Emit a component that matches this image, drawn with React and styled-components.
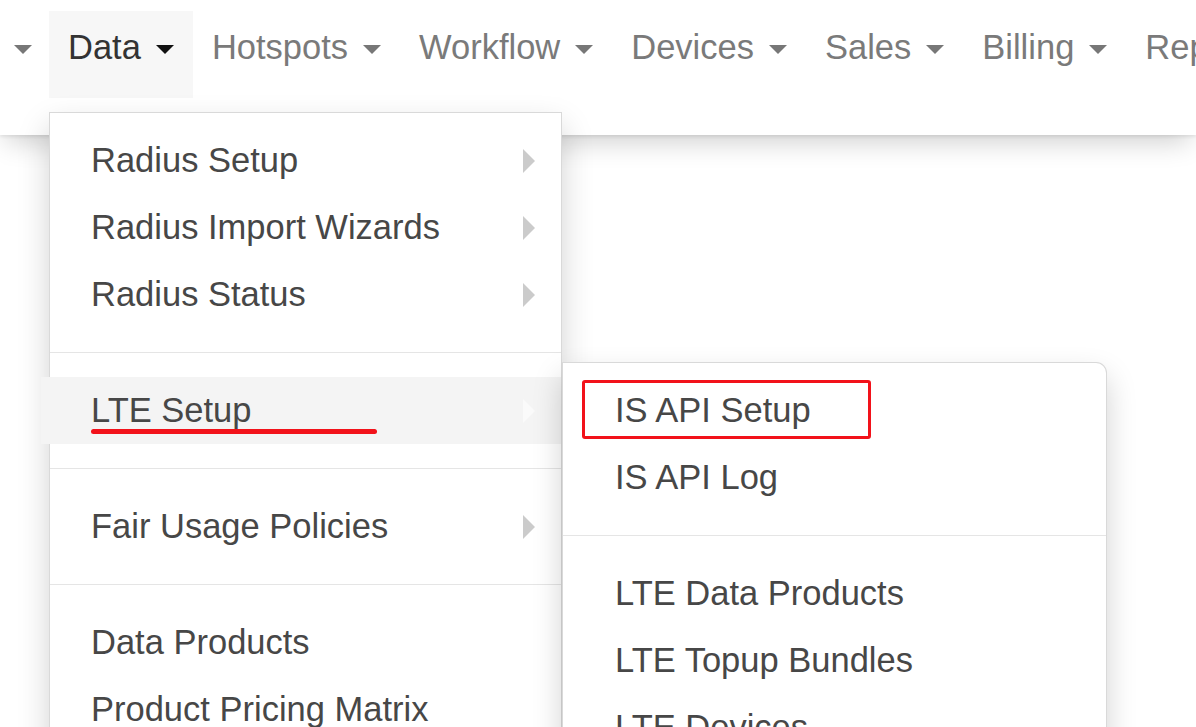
import React from "react";
import styled, { createGlobalStyle, css } from "styled-components";

const GlobalStyle = createGlobalStyle`
  html {
    overflow: hidden;
  }
  body {
    margin: 0;
    min-height: 100vh;
    background: #fff;
    font-family: "Liberation Sans", Arial, sans-serif;
  }
`;

const Navbar = styled.nav`
  position: relative;
  height: 135px;
  background: #fff;
  box-shadow: 0 2px 3px rgba(0, 0, 0, 0.07), 0 12px 26px -6px rgba(0, 0, 0, 0.2);
  z-index: 1;
`;

const NavList = styled.ul`
  display: flex;
  margin: 0;
  padding: 11px 0 0 0;
  list-style: none;
`;

const NavItem = styled.li`
  position: relative;
  flex-shrink: 0;
`;

const NavLink = styled.a`
  box-sizing: border-box;
  display: flex;
  align-items: center;
  height: 87px;
  padding: 0 19px 15px;
  font-size: 34.5px;
  white-space: nowrap;
  color: ${({ $active }) => ($active ? "#333" : "#7a7a7a")};
  background: ${({ $active }) => ($active ? "#f7f7f7" : "transparent")};
  text-decoration: none;
  cursor: pointer;
  ${({ $edge }) =>
    $edge &&
    css`
      padding: 0 17px 15px 14px;
    `}
`;

const Caret = styled.span`
  display: inline-block;
  margin-left: ${({ $alone }) => ($alone ? "0" : "15px")};
  margin-top: 4px;
  border-top: 9px solid ${({ $dark }) => ($dark ? "#111" : "#777")};
  border-left: 9px solid transparent;
  border-right: 9px solid transparent;
`;

const Dropdown = styled.ul`
  position: absolute;
  top: 101px;
  left: 0;
  width: 511px;
  margin: 0;
  padding: 14px 0;
  list-style: none;
  background: #fff;
  border: 1px solid rgba(0, 0, 0, 0.15);
  box-shadow: 0 14px 30px rgba(0, 0, 0, 0.18);
`;

const SubMenu = styled(Dropdown)`
  top: -15px;
  left: calc(100% + 1px);
  width: 543px;
  border-radius: 0 11px 11px 11px;
`;

const MenuItem = styled.li`
  position: relative;
`;

const MenuLink = styled.a`
  display: flex;
  align-items: center;
  height: 67px;
  padding-left: ${({ $inset }) => $inset}px;
  font-size: 34.5px;
  color: #474747;
  white-space: nowrap;
  text-decoration: none;
  cursor: pointer;
  ${({ $hover }) =>
    $hover &&
    css`
      margin-left: -9px;
      padding-left: ${({ $inset }) => $inset + 9}px;
      background: #f4f4f4;
    `}
`;

const Arrow = styled.span`
  margin-left: auto;
  margin-right: 26px;
  border-left: 12px solid ${({ $hover }) => ($hover ? "#fafafa" : "#cbcbcb")};
  border-top: 12px solid transparent;
  border-bottom: 12px solid transparent;
`;

const Divider = styled.li`
  height: 1px;
  margin: 24px 0;
  background: #e5e5e5;
`;

/* red markers drawn over the menu */
const Underline = styled.span`
  position: absolute;
  left: 41px;
  top: 52px;
  width: 286px;
  height: 5px;
  border-radius: 3px;
  background: #f2121a;
`;

const Outline = styled.span`
  position: absolute;
  left: 19px;
  top: 3px;
  width: 283px;
  height: 53px;
  border: 3px solid #f2121a;
  border-radius: 3px;
`;

const navItems = ["Hotspots", "Workflow", "Devices", "Sales", "Billing", "Reports"];

const lteItems = [
  { label: "IS API Setup", marked: true },
  { label: "IS API Log" },
  null,
  { label: "LTE Data Products" },
  { label: "LTE Topup Bundles" },
  { label: "LTE Devices" },
];

function LteMenu() {
  return (
    <SubMenu>
      {lteItems.map((item, i) =>
        item ? (
          <MenuItem key={i}>
            <MenuLink $inset={52}>{item.label}</MenuLink>
            {item.marked && <Outline />}
          </MenuItem>
        ) : (
          <Divider key={i} />
        )
      )}
    </SubMenu>
  );
}

function DataMenu() {
  return (
    <Dropdown>
      <MenuItem>
        <MenuLink $inset={41}>
          Radius Setup
          <Arrow />
        </MenuLink>
      </MenuItem>
      <MenuItem>
        <MenuLink $inset={41}>
          Radius Import Wizards
          <Arrow />
        </MenuLink>
      </MenuItem>
      <MenuItem>
        <MenuLink $inset={41}>
          Radius Status
          <Arrow />
        </MenuLink>
      </MenuItem>
      <Divider />
      <MenuItem>
        <MenuLink $inset={41} $hover>
          LTE Setup
          <Arrow $hover />
        </MenuLink>
        <Underline />
        <LteMenu />
      </MenuItem>
      <Divider />
      <MenuItem>
        <MenuLink $inset={41}>
          Fair Usage Policies
          <Arrow />
        </MenuLink>
      </MenuItem>
      <Divider />
      <MenuItem>
        <MenuLink $inset={41}>Data Products</MenuLink>
      </MenuItem>
      <MenuItem>
        <MenuLink $inset={41}>Product Pricing Matrix</MenuLink>
      </MenuItem>
    </Dropdown>
  );
}

export default function App() {
  return (
    <>
      <GlobalStyle />
      <Navbar>
        <NavList>
          <NavItem>
            <NavLink $edge>
              <Caret $alone />
            </NavLink>
          </NavItem>
          <NavItem>
            <NavLink $active>
              Data
              <Caret $dark />
            </NavLink>
            <DataMenu />
          </NavItem>
          {navItems.map((label) => (
            <NavItem key={label}>
              <NavLink>
                {label}
                <Caret />
              </NavLink>
            </NavItem>
          ))}
        </NavList>
      </Navbar>
    </>
  );
}
